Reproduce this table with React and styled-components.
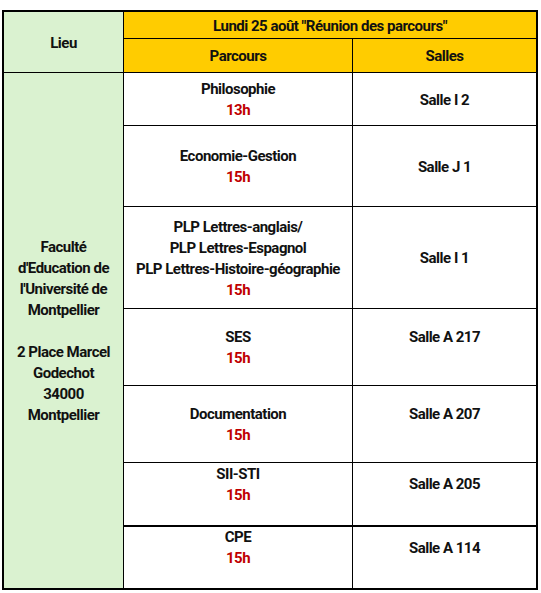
import React from 'react';
import styled, { createGlobalStyle } from 'styled-components';

const Global = createGlobalStyle`
  html, body { margin: 0; padding: 0; background: #ffffff; }
  body { font-family: Roboto, "Liberation Sans", sans-serif; }
`;

const Page = styled.div`
  padding: 10px 0 0 2px;
`;

const Grid = styled.div`
  display: grid;
  width: max-content;
  grid-template-columns: 120px 229px 183px;
  grid-template-rows: 27px 34px 53px 81px 102px 77px 77px 64px 61px;
  border: 2px solid #000;
`;

const Cell = styled.div`
  box-sizing: border-box;
  display: flex;
  flex-direction: column;
  align-items: center;
  justify-content: center;
  text-align: center;
  padding-top: 2px;
  grid-column: ${(p) => p.$col};
  grid-row: ${(p) => p.$row};
  background: ${(p) => p.$bg || '#ffffff'};
  border-right: ${(p) => (p.$lastCol ? 'none' : '1px solid #000')};
  border-bottom: ${(p) => (p.$lastRow ? '0px' : p.$thick ? '2px' : '1px')} solid #000;
  font-weight: 700;
  font-size: 15px;
  line-height: 21px;
  letter-spacing: -0.5px;
  color: #111111;
`;

const Block = styled.div`
  padding-bottom: ${(p) => (p.$trail ? '21px' : '0')};
  white-space: nowrap;
`;

const Line = styled.div``;

const Time = styled.div`
  color: #c00000;
`;

const GREEN = '#daf2d0';
const YELLOW = '#ffcc00';

const rows = [
  { lines: ['Philosophie'], time: '13h', salle: 'Salle I 2' },
  { lines: ['Economie-Gestion'], time: '15h', salle: 'Salle J 1' },
  {
    lines: ['PLP Lettres-anglais/', 'PLP Lettres-Espagnol', 'PLP Lettres-Histoire-géographie'],
    time: '15h',
    salle: 'Salle I 1',
  },
  { lines: ['SES'], time: '15h', salle: 'Salle A 217', salleTrail: true },
  { lines: ['Documentation'], time: '15h', salle: 'Salle A 207', salleTrail: true },
  { lines: ['SII-STI'], time: '15h', salle: 'Salle A 205', trail: true, salleTrail: true, thick: true },
  { lines: ['CPE'], time: '15h', salle: 'Salle A 114', trail: true, salleTrail: true, last: true },
];

const lieu = [
  'Faculté',
  "d'Education de",
  "l'Université de",
  'Montpellier',
  '\u00a0',
  '2 Place Marcel',
  'Godechot',
  '34000',
  'Montpellier',
];

export default function App() {
  return (
    <>
      <Global />
      <Page>
        <Grid>
          <Cell $col="1" $row="1 / 3" $bg={GREEN}>Lieu</Cell>
          <Cell $col="2 / 4" $row="1" $bg={YELLOW} $lastCol>
            Lundi 25 août "Réunion des parcours"
          </Cell>
          <Cell $col="2" $row="2" $bg={YELLOW}>Parcours</Cell>
          <Cell $col="3" $row="2" $bg={YELLOW} $lastCol>Salles</Cell>
          <Cell $col="1" $row="3 / 10" $bg={GREEN} $lastRow>
            <Block>
              {lieu.map((l, i) => (
                <Line key={i}>{l}</Line>
              ))}
            </Block>
          </Cell>
          {rows.map((r, i) => (
            <React.Fragment key={i}>
              <Cell $col="2" $row={String(i + 3)} $thick={r.thick} $lastRow={r.last}>
                <Block $trail={r.trail}>
                  {r.lines.map((l, j) => (
                    <Line key={j}>{l}</Line>
                  ))}
                  <Time>{r.time}</Time>
                </Block>
              </Cell>
              <Cell $col="3" $row={String(i + 3)} $thick={r.thick} $lastRow={r.last} $lastCol>
                <Block $trail={r.salleTrail}>
                  <Line>{r.salle}</Line>
                </Block>
              </Cell>
            </React.Fragment>
          ))}
        </Grid>
      </Page>
    </>
  );
}
